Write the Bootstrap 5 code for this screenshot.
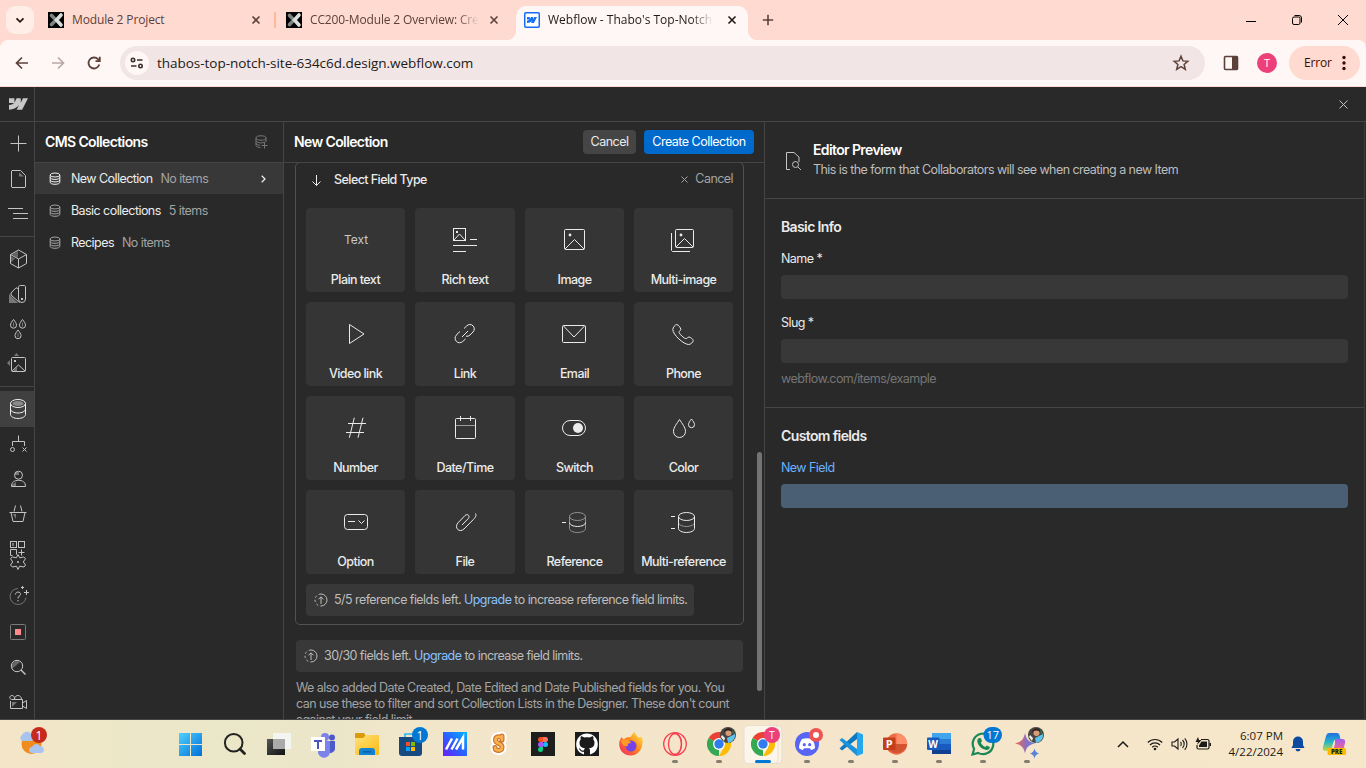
<!DOCTYPE html>
<html lang="en">
<head>
<meta charset="utf-8">
<title>Webflow - Thabo's Top-Notch Site</title>
<link href="https://cdn.jsdelivr.net/npm/bootstrap@5.3.0/dist/css/bootstrap.min.css" rel="stylesheet">
<style>
:root{--line:#454545;--panel:#292929;--ic:#c4c4c4}
html,body{height:100%;overflow:hidden}
body{font-family:"Inter",sans-serif;font-size:12.5px;line-height:16px;letter-spacing:-.56px;background:var(--panel);color:#ebebeb}
svg{display:block;flex:none;overflow:visible;fill:none;stroke:currentColor}
svg text{stroke:none;letter-spacing:0}
.seg{font-family:"Open Sans","Noto Sans",sans-serif;letter-spacing:0}
/* browser chrome */
.tabstrip{height:40px;background:#ffdad0;color:#5c413a;font-size:12px}
.tabsearch{width:28px;height:28px;margin-left:6px;border-radius:9px;background:#ffeee8;color:#2b1713}
.btab{height:28px}
.ttl{overflow:hidden;white-space:nowrap;line-height:28px;letter-spacing:-.14px}
.fade-end{-webkit-mask-image:linear-gradient(90deg,#000 calc(100% - 22px),transparent);mask-image:linear-gradient(90deg,#000 calc(100% - 22px),transparent)}
.btab-on{height:34px;margin-top:6px;width:232px;background:#fff7f5;border-radius:10px 10px 0 0;padding:0 0 6px 8px;color:#231917;position:relative}
.btab-on .ttl{letter-spacing:0}
.btab-on:before,.btab-on:after{content:"";position:absolute;bottom:0;width:10px;height:10px}
.btab-on:before{left:-10px;background:radial-gradient(circle at 0 0,transparent 10px,#fff7f5 10.5px)}
.btab-on:after{right:-10px;background:radial-gradient(circle at 100% 0,transparent 10px,#fff7f5 10.5px)}
.tabsep{width:2px;height:16px;background:#ffb59e;border-radius:1px}
.winbtn{width:46px;height:40px;color:#000}
.addrrow{height:47px;background:#ffdad0;color:#5c413a}
.addrin{height:46px;background:#fff7f5;border-radius:8px 8px 0 0;padding-right:6px}
.omni{width:1085px;height:34px;border-radius:17px;background:#f1e6e5;padding:0 15px 0 5px;margin-left:14px}
.site{width:24px;height:24px;border-radius:50%;background:#fff7f5;color:#3b2d2a}
.url{color:#231917;font-size:13.5px;line-height:20px;margin-left:8px;letter-spacing:-.03px}
.errpill{width:71px;height:34px;border-radius:17px;background:#ffdad0;color:#3a0b01;font-size:12px;margin-left:12px;padding-left:15px;letter-spacing:-.15px}
.avatar{width:20px;height:20px;border-radius:50%;background:#ec407a;color:#ffe;font-size:11px}
/* app frame */
.app{height:633px;background:var(--panel);border-bottom:1px solid var(--line)}
.topline{height:35px;border-bottom:1px solid var(--line)}
.logo-cell{width:35px;border-right:1px solid var(--line);color:#c8c8c8}
.rail{width:35px;border-right:1px solid var(--line);color:var(--ic);padding-top:4px}
.rail-it{height:35px;padding:5px 0 0 6px}
.rail-on{height:36px;background:#404040;color:#f0f0f0}
.rail hr{margin:5px 0 4px;opacity:1;border-color:var(--line);border-width:1px 0 0;color:var(--line);height:1px}
.rail-low{margin-top:-23px}
.cms{width:249px;border-right:1px solid var(--line)}
.phead{height:41px;border-bottom:1px solid var(--line);padding:0 10px}
.h-ttl{font-size:14px;font-weight:600;letter-spacing:-.62px;color:#fff;line-height:16px}
.crow{height:31px;margin-bottom:1px;padding:0 14px;color:#ededed}
.crow svg{color:#a3a3a3}
.crow-on{background:#383838}
.crow-on svg{color:#f0f0f0}
.dim{color:#a3a3a3}
.mid{width:480px}
.bt{height:24px;border-radius:4px;padding:0;width:53px;font-size:12.5px;line-height:24px;color:#ebebeb;background:#454545;border:0;letter-spacing:-.5px;white-space:nowrap}
.bt-main{width:110px;background:#006acc;color:#fff}
.scroller{height:556px;overflow:hidden}
.fbox{width:449px;height:463px;margin:-1px 0 0 11px;border:1px solid #525252;border-radius:5px;padding:0 10px}
.fgrid{display:grid;grid-template-columns:99px 100px 99px 99px;gap:10px;margin-top:13px}
.ftile{height:84px;border-radius:4px;background:#353535;color:#ebebeb;text-align:center;padding-top:20px;font-weight:450}
.ftile svg{margin-left:37px;margin-bottom:19px}
.limit{height:32px;border-radius:4px;background:#383838;color:#bdbdbd;white-space:nowrap}
.limit a{color:#8ac2ff;text-decoration:none}
.note{width:447px;margin:8px 0 0 12px;color:#a3a3a3;white-space:nowrap}
.thumb{width:5px;height:239px;margin-top:289px;margin-left:13px;border-radius:3px;background:#737373}
.prev{border-left:1px solid var(--line);border-right:1px solid #3a3a3a;margin-right:1px}
.prev-head{height:77px;border-bottom:1px solid var(--line);padding:20px 0 0 18px}
.prev-info{height:209px;border-bottom:1px solid var(--line);padding:20px 16px 0}
.prev .h-ttl{color:#ebebeb}
.prev-head .h-ttl{color:#fff}
.inp{height:24px;border-radius:4px;background:#383838}
.inp-new{background:#4b5f74}
/* taskbar */
.task{height:48px;background:linear-gradient(90deg,#f5e5c8,#ebe7c8 10%,#ebe6c9 24%,#f2e6ca 30%,#f5e5ca 60%,#f6e7cb)}
.task>svg{width:44px;height:48px}
.weather{margin-right:125px}
.tray{color:#1d1b17;font-size:11.5px;line-height:16px}
</style>
</head>
<body>
<svg width="0" height="0" style="position:absolute" aria-hidden="true">
 <defs>
  <linearGradient id="gWin" x1="0" y1="0" x2="1" y2="1"><stop offset="0" stop-color="#4fd0ff"/><stop offset="1" stop-color="#0070d8"/></linearGradient>
  <linearGradient id="gM" x1="0" y1="1" x2="1" y2="0"><stop offset="0" stop-color="#6a1df5"/><stop offset=".5" stop-color="#2a62ff"/><stop offset="1" stop-color="#00b4ff"/></linearGradient>
  <linearGradient id="gFox" x1="1" y1="0" x2="0" y2="1"><stop offset="0" stop-color="#fff04a"/><stop offset=".45" stop-color="#ff8a1c"/><stop offset="1" stop-color="#f01f6a"/></linearGradient>
  <linearGradient id="gFold" x1="0" y1="0" x2="1" y2="1"><stop offset="0" stop-color="#ffe27a"/><stop offset="1" stop-color="#fbb911"/></linearGradient>
  <linearGradient id="gSpark" x1="0" y1="0" x2="1" y2="0"><stop offset="0" stop-color="#f2664b"/><stop offset=".5" stop-color="#8a6fc4"/><stop offset="1" stop-color="#3f8fe8"/></linearGradient>
  <linearGradient id="gDk" x1="0" y1="0" x2="1" y2="1"><stop offset="0" stop-color="#555"/><stop offset="1" stop-color="#111"/></linearGradient>
  <linearGradient id="gCopA" x1="0" y1="0" x2="0" y2="1"><stop offset="0" stop-color="#1f6fe0"/><stop offset=".5" stop-color="#25b5c9"/><stop offset="1" stop-color="#c9d93a"/></linearGradient>
  <linearGradient id="gCopB" x1="0" y1="0" x2="0" y2="1"><stop offset="0" stop-color="#a45bf0"/><stop offset="1" stop-color="#ff6a7c"/></linearGradient>
  <symbol id="x" viewBox="0 0 16 16"><path d="M4.500 4.500l7 7M11.500 4.500l-7 7" stroke-width="1.600"/></symbol>
  <symbol id="wf" viewBox="0 0 20 12"><path stroke="none" fill="currentColor" d="M20 0l-6.200 12H8l2.600-5C8.500 9.800 5 11.700 0 12V7.200s3.200-.2 5.100-2.200H0V0h5.700v4.600L8 0h4.400v4.600L14.700 0z"/></symbol>
  <symbol id="fav" viewBox="0 0 16 16"><path stroke="none" fill="#000" d="M0 0h16v16H0z"/><path stroke="#7d8483" stroke-width="3.600" stroke-linecap="round" d="M3.500 3.500l3 3M3.500 12.500l3-3"/><path stroke="#d9dedd" stroke-width="3.600" stroke-linecap="round" d="M13 3L8.500 8l4.500 5"/></symbol>
  <symbol id="db" viewBox="0 0 12 13"><ellipse cx="6" cy="3" rx="4.800" ry="2"/><path d="M1.200 3v7.300c0 1.200 2.100 2 4.800 2s4.800-.8 4.800-2V3M1.200 5.400c0 1.200 2.100 2 4.800 2s4.800-.8 4.800-2M1.200 7.900c0 1.200 2.100 2 4.800 2s4.800-.8 4.800-2"/></symbol>
  <symbol id="up" viewBox="0 0 14 14"><circle cx="7" cy="7" r="6" stroke-dasharray="19 2.200 2.200 2.200 2.200 2.200 2.200 2.200 3.500" transform="rotate(-90 7 7)"/><path d="M7 11V4M4.500 6.300L7 3.800l2.500 2.500"/></symbol>
  <symbol id="chr" viewBox="0 0 24 24"><g stroke="none"><path fill="#ea4335" d="M12 12L1.600 6a12 12 0 0 1 20.800 0z"/><path fill="#34a853" d="M12 12l0 12A12 12 0 0 1 1.600 6z"/><path fill="#fbbc05" d="M12 6h10.400A12 12 0 0 1 12 24l5.200-9z"/><circle cx="12" cy="12" r="6" fill="#fff"/><circle cx="12" cy="12" r="4.700" fill="#2f7cf0"/></g></symbol>
  <symbol id="pic" viewBox="0 0 16 16"><g stroke="none"><circle cx="8" cy="8" r="8" fill="#4b4440"/><path fill="#5bc5ee" d="M7 11l8-4a8 8 0 0 1-7 9z"/><circle cx="8.500" cy="6" r="3" fill="#d99c78"/><path fill="#2d2523" d="M4 6c0-6 9-6 8-1-3-2-6-2-8 1z"/><path fill="#eee" d="M2 8l3 3-1 3-3-4z"/><path fill="#2f6d4c" d="M12 2l3 4-2 2z"/></g></symbol>
 </defs>
</svg>
<div class="d-flex flex-column vh-100">
<header>
 <div class="tabstrip seg d-flex align-items-center">
  <div class="tabsearch d-flex align-items-center justify-content-center"><svg width="10" height="10" viewBox="0 0 10 10" stroke-width="1.800"><path d="M1.500 3.300L5 6.800l3.500-3.500"/></svg></div>
  <div class="btab d-flex align-items-center" style="width:240px"><svg width="16" height="16" style="margin-left:14px"><use href="#fav"/></svg><span class="ttl flex-grow-1" style="margin-left:8px">Module 2 Project</span><svg width="16" height="16" style="margin-right:10px"><use href="#x"/></svg></div>
  <div class="tabsep"></div>
  <div class="btab d-flex align-items-center" style="width:240px"><svg width="16" height="16" style="margin-left:10px"><use href="#fav"/></svg><span class="ttl fade-end" style="margin-left:8px;width:169px">CC200-Module 2 Overview: Creating</span><svg width="16" height="16" style="margin-left:7px"><use href="#x"/></svg></div>
  <div class="btab-on d-flex align-items-center"><svg width="16" height="16" viewBox="0 0 16 16" color="#146ef5"><rect x=".75" y=".75" width="14.500" height="14.500" rx="1" fill="#fff" stroke-width="1.500"/><use href="#wf" x="3" y="5" width="10" height="6"/></svg><span class="ttl fade-end" style="margin-left:8px;width:165px">Webflow - Thabo's Top-Notch Site</span><svg width="16" height="16" style="margin-left:11px"><use href="#x"/></svg></div>
  <svg width="12" height="12" viewBox="0 0 12 12" style="margin-left:14px" stroke-width="1.600"><path d="M6 .8v10.400M.8 6h10.400"/></svg>
  <div class="ms-auto d-flex">
   <div class="winbtn d-flex align-items-center justify-content-center"><svg width="10" height="11" viewBox="0 0 10 11"><path d="M0 6.500h10"/></svg></div>
   <div class="winbtn d-flex align-items-center justify-content-center"><svg width="10" height="10" viewBox="0 0 10 10"><rect x=".5" y="2" width="7.500" height="7.500" rx="1.500"/><path d="M2.500.5h4.500a2.500 2.500 0 0 1 2.500 2.500v4.500"/></svg></div>
   <div class="winbtn d-flex align-items-center justify-content-center"><svg width="10" height="10" viewBox="0 0 10 10"><path d="M0 0l10 10M10 0L0 10"/></svg></div>
  </div>
 </div>
 <div class="addrrow">
  <div class="addrin seg d-flex align-items-center">
   <svg width="16" height="16" viewBox="0 0 16 16" style="margin-left:14px" stroke-width="1.700"><path d="M14 8H2.800M8 2.500L2.500 8 8 13.500"/></svg>
   <svg width="16" height="16" viewBox="0 0 16 16" style="margin-left:20px" stroke-width="1.700" color="#b8a9a5"><path d="M2 8h11.200M8 2.500L13.500 8 8 13.500"/></svg>
   <svg width="16" height="16" viewBox="0 0 16 16" style="margin-left:20px" stroke-width="1.800"><path d="M13.300 9.500A5.500 5.500 0 1 1 12 4.200l1.300 1.500"/><path d="M13.800 1.800v4.300H9.500" /></svg>
   <div class="omni d-flex align-items-center" style="margin-left:18px">
    <div class="site d-flex align-items-center justify-content-center"><svg width="14" height="12" viewBox="0 0 14 12" stroke-width="1.600"><circle cx="3" cy="3" r="1.700"/><path d="M7 3h5.500M1 9h5.500"/><circle cx="10.500" cy="9" r="1.700"/></svg></div>
    <span class="url">thabos-top-notch-site-634c6d.design.webflow.com</span>
    <svg class="ms-auto" width="18" height="18" viewBox="0 0 18 18" stroke-width="1.500"><path d="M9 2.300l1.900 4.600 4.900.4-3.700 3.200 1.200 4.800L9 12.700l-4.300 2.600 1.200-4.800-3.700-3.200 4.900-.4z"/></svg>
   </div>
   <svg width="16" height="16" viewBox="0 0 16 16" style="margin-left:18px"><rect x="1.500" y="1.500" width="13" height="13" rx="1" stroke-width="1.600"/><path fill="currentColor" stroke="none" d="M9 1h5.500v14H9z"/></svg>
   <div class="avatar d-flex align-items-center justify-content-center" style="margin-left:18px">T</div>
   <div class="errpill d-flex align-items-center">Error<svg width="4" height="16" viewBox="0 0 4 16" style="margin-left:10px"><g fill="currentColor" stroke="none"><circle cx="2" cy="2.500" r="1.700"/><circle cx="2" cy="8" r="1.700"/><circle cx="2" cy="13.500" r="1.700"/></g></svg></div>
  </div>
 </div>
</header>
<div class="app d-flex flex-column">
 <div class="topline d-flex justify-content-between align-items-stretch">
  <div class="logo-cell d-flex align-items-center"><svg width="19" height="12" style="margin-left:9px"><use href="#wf"/></svg></div>
  <svg class="align-self-center" width="9" height="9" viewBox="0 0 9 9" style="margin-right:18px" color="#c4c4c4"><path d="M.5.5l8 8M8.500.5l-8 8"/></svg>
 </div>
 <div class="d-flex flex-grow-1" style="min-height:0">
  <nav class="rail d-flex flex-column flex-shrink-0">
   <div class="rail-it"><svg width="24" height="24"><path d="M4.500 12.500h16M12.500 4.500v16"/></svg></div>
   <div class="rail-it"><svg width="24" height="24"><path d="M13 6.500v4h5z" fill="#777" stroke="none"/><path d="M6 4.500h8.500l5 5V21l-.5.500H6l-.5-.5V5z"/></svg></div>
   <div class="rail-it"><svg width="24" height="24"><path d="M2 7.500h15M7 12.500h15M7 17.500h15"/></svg></div>
   <hr>
   <div class="rail-it"><svg width="24" height="24"><path fill="#666" stroke="none" d="M12 5v7L6 8.500zM5 10l4 2.500-4 4z"/><path d="M12.500 4l8 4.500v9l-8 4.500-8-4.500v-9zM4.500 8.500l8 4.500 8-4.500M12.500 13v9"/></svg></div>
   <div class="rail-it"><svg width="24" height="24"><path fill="#777" stroke="none" d="M3 13l9 9H3z"/><path d="M12.500 6.500c0-1.500.500-2 2-2h3.500c1 0 1.500.5 1.500 1.500V18a3.500 3.500 0 0 1-7 0zM12 7.500L10 6.800 5 12l0 2 8.500 7.500"/><path fill="currentColor" stroke="none" d="M15 17h2v2h-2z"/></svg></div>
   <div class="rail-it"><svg width="24" height="24"><path id="dr" d="M7.500 3.500c-1.500 2-3 3.800-3 5.700a3 3 0 0 0 6 0c0-1.900-1.500-3.700-3-5.700z"/><path stroke="#777" d="M7.500 6.500v4M16.500 6.500v4M12 17v4"/><use href="#dr" x="9"/><use href="#dr" x="4.500" y="10.500"/></svg></div>
   <div class="rail-it"><svg width="24" height="24"><path fill="#777" stroke="none" d="M8 5l2.500-3L13 5zM4 9v6l-3-3z"/><path fill="#777" stroke="none" d="M8 19l3-3v4H8z"/><rect x="5.500" y="6.500" width="14" height="14" rx="1"/><path d="M6 20l6.500-6 6.500 6"/><path fill="currentColor" stroke="none" d="M8 9h2v2H8z"/></svg></div>
   <hr>
   <div class="rail-it rail-on"><svg width="24" height="24"><ellipse cx="12" cy="7.500" rx="5.500" ry="2.500" fill="#8a8a8a" stroke="none"/><ellipse cx="12" cy="7.500" rx="7.500" ry="4"/><path d="M4.500 7.500v11c0 2.200 3.400 4 7.500 4s7.500-1.800 7.500-4v-11M4.500 13c0 2.200 3.400 4 7.500 4s7.500-1.800 7.500-4"/></svg></div>
   <div class="rail-it"><svg width="24" height="24"><path d="M12.500 3.500v6M6.500 14V9.500h12V14M16.500 15.500l4 4M20.500 15.500l-4 4"/><circle cx="6.500" cy="17.500" r="2"/></svg></div>
   <div class="rail-it"><svg width="24" height="24"><path fill="#777" stroke="none" d="M9 5h4v3H9zM6 18l4-3v4H6z"/><circle cx="12.500" cy="8.200" r="4"/><path d="M5.500 19.500c0-4.200 2.800-6.200 7-6.200s7 2 7 6.200z"/></svg></div>
   <div class="rail-it"><svg width="24" height="24"><path fill="#777" stroke="none" d="M7 12h3v5z"/><path d="M3.500 10.500h17M5 10.500l2 9h10l2-9M8 9.500L9.500 3.500M16 9.500l-1.500-6"/></svg></div>
   <div class="rail-it"><svg width="24" height="24"><path fill="#777" stroke="none" d="M6 6h2v3H6z"/><rect x="4.500" y="4.500" width="6" height="6"/><rect x="12.500" y="4.500" width="6" height="6"/><path d="M10.500 17.500V12.500h-6v6h2M15.500 12.500v6M12.500 15.500h6"/></svg></div>
   <div class="rail-low">
    <div class="rail-it"><svg width="24" height="24"><path d="M12 5.500l1.700 3.300 4-.8 1.800 1.500-2.200 3.500 2.200 3-1.500 2-4.500-.8L12 20.500l-1.500-3.300-4.200.8-1.800-2 2.200-3-2.200-3.500L6.300 8l4 .8z"/><path d="M11 13h2M12 12v2" /></svg></div>
    <div class="rail-it"><svg width="24" height="24"><path stroke="#757575" d="M12 4.500a8 8 0 1 0 8 9"/><path d="M9.500 10.500c0-3.500 5.500-3 5 0-.3 1.500-2.500 1.500-2.500 4M12 16v1.500M15 3.500h3M16.500 2v3M18 8.500h5M20.500 6v5"/></svg></div>
    <div class="rail-it"><svg width="24" height="24"><rect x="4.500" y="5.500" width="15" height="15" rx="1" stroke="#7b7b7b"/><path fill="#ff8a8a" stroke="none" d="M9 10h6v6H9z"/></svg></div>
    <div class="rail-it"><svg width="24" height="24"><path fill="#666" stroke="none" d="M6 15l8-7-3-2-5 4z"/><circle cx="11" cy="12" r="5.700"/><path stroke-width="1.400" d="M15 16l4.500 4.500"/></svg></div>
    <div class="rail-it"><svg width="24" height="24"><path fill="#777" stroke="none" d="M6 13h5l-5 5z"/><path d="M4.500 12V19.500h12V10.500h-11C3 10 3.300 6.500 6 6.500c2 0 2.500 2 2.500 3.500C9 5 15.500 5.500 15.500 10.500M16.500 14l4-2.500v8l-4-2.500"/></svg></div>
   </div>
  </nav>
  <section class="cms flex-shrink-0">
   <div class="phead d-flex align-items-center justify-content-between"><span class="h-ttl">CMS Collections</span><svg width="14" height="14" viewBox="0 0 14 14" color="#757575" style="margin-right:4px"><ellipse cx="6" cy="3" rx="5" ry="2.200"/><path d="M1 3v7.500c0 1.200 2 2 4.500 2M11 3v3.500M1 5.700c0 1.200 2.200 2.200 5 2.200s5-1 5-2.200M1 8.300c0 1 1.500 1.800 4 2M9.500 7.500v6M6.500 10.500h6"/></svg></div>
   <div class="crow crow-on d-flex align-items-center"><svg width="12" height="13"><use href="#db"/></svg><span style="margin-left:10px">New Collection</span><span class="dim ms-2">No items</span><svg class="ms-auto" width="5" height="8" viewBox="0 0 5 8" style="margin-right:3px" stroke-width="1.200"><path d="M.7.8L4 4 .7 7.200"/></svg></div>
   <div class="crow d-flex align-items-center"><svg width="12" height="13"><use href="#db"/></svg><span style="margin-left:10px">Basic collections</span><span class="dim ms-2">5 items</span></div>
   <div class="crow d-flex align-items-center"><svg width="12" height="13"><use href="#db"/></svg><span style="margin-left:10px">Recipes</span><span class="dim ms-2">No items</span></div>
  </section>
  <section class="mid flex-shrink-0">
   <div class="phead d-flex align-items-center"><span class="h-ttl me-auto">New Collection</span><button class="bt">Cancel</button><button class="bt bt-main ms-2">Create Collection</button></div>
   <div class="scroller d-flex">
    <div>
     <div class="fbox">
      <div class="d-flex align-items-center" style="height:32px;padding-top:2px"><svg width="9" height="11" viewBox="0 0 9 11" style="margin-left:6px"><path d="M4.500 0v10.500M.5 6.500l4 4 4-4"/></svg><span style="margin-left:13px;font-weight:450">Select Field Type</span><span class="ms-auto dim d-flex align-items-center" style="margin-top:-2px"><svg width="7" height="7" viewBox="0 0 7 7" style="margin-right:7px"><path d="M.5.5l6 6M6.500.5l-6 6"/></svg>Cancel</span></div>
      <div class="fgrid">
       <div class="ftile"><svg width="25" height="25"><text x="13" y="16" text-anchor="middle" font-size="12" font-weight="400" fill="#c8c8c8">Text</text></svg>Plain text</div>
       <div class="ftile"><svg width="25" height="25"><rect x="1.500" y=".5" width="12" height="12"/><path d="M2 12l5.500-6 5.500 6M18 11.500h7M1 17.500h24M1 23.500h13"/><path fill="currentColor" stroke="none" d="M4 3h2v2H4z"/></svg>Rich text</div>
       <div class="ftile"><svg width="25" height="25"><rect x="2.500" y="1.500" width="20" height="20" rx="1"/><path d="M3 21l9.500-9.500L22 21"/><circle cx="8" cy="7" r="1.400" fill="currentColor" stroke="none"/></svg>Image</div>
       <div class="ftile"><svg width="25" height="25"><rect x="4.500" y="1.500" width="18" height="18" rx="1"/><path d="M5 19l8.500-8.500L22 19M.5 5v17.500l1 1H19"/><circle cx="10" cy="7" r="1.400" fill="currentColor" stroke="none"/></svg>Multi-image</div>
       <div class="ftile"><svg width="25" height="25"><path stroke-linejoin="round" d="M6.500 2.500L21 12 6.500 21.500z"/></svg>Video link</div>
       <div class="ftile"><svg width="25" height="25"><path d="M10 15l6-6M12 6.500l2.800-2.700a4.300 4.300 0 0 1 6.200 6.200L18 13a4.300 4.300 0 0 1-4 1.200M8 9.800c-.7.100-1.200.5-1.700 1L4.500 13a4.300 4.300 0 0 0 6.200 6.500L13.500 17"/></svg>Link</div>
       <div class="ftile"><svg width="25" height="25"><rect x=".5" y="3.500" width="23" height="17" rx="1"/><path d="M1.500 4L12 15 22.500 4"/></svg>Email</div>
       <div class="ftile"><svg width="25" height="25"><path stroke-linejoin="round" d="M5.800 2.500c1.200 0 4 3.500 4 4.700 0 1.300-1.800 2-1.800 3 0 1.500 5.300 6.500 7 6.500 1 0 1.700-1.700 3-1.700 1.500 0 4.200 2.300 4.200 3.600 0 1.500-2.500 3.900-4.500 3.900C12.500 22.500 1.800 12.500 1.800 7.500c0-2 2.500-5 4-5z"/></svg>Phone</div>
       <div class="ftile"><svg width="25" height="25"><path d="M5 7.500h18M3 16.500h18M11.300 1.700l-5 20M20 1.700l-5 20"/></svg>Number</div>
       <div class="ftile"><svg width="25" height="25"><path opacity=".55" d="M4 9.500h19"/><rect x="3.500" y="2.500" width="20" height="20" rx="1"/><path d="M8.500 0v5M18.500 0v5"/></svg>Date/Time</div>
       <div class="ftile"><svg width="25" height="25"><rect x=".5" y="4.500" width="23" height="15" rx="7.500"/><circle cx="16" cy="12" r="5" fill="currentColor" stroke="none"/></svg>Switch</div>
       <div class="ftile"><svg width="25" height="25"><path d="M8.500 3.500c-2.500 4-6 7.800-6 12a6 6 0 0 0 12 0c0-4.200-3.500-8-6-12zM20.500 3c-1.500 2-3 3.700-3 5.700a3 3 0 0 0 6 0c0-2-1.500-3.700-3-5.700z"/></svg>Color</div>
       <div class="ftile"><svg width="25" height="25"><rect x="1.500" y="4.500" width="23" height="15" rx="3"/><path d="M5 11.500h7M15.500 10.500l3 3 3-3"/></svg>Option</div>
       <div class="ftile"><svg width="25" height="25"><path d="M10 15l6.300-6.500c2.200-2.600-.9-5.300-3.300-3L6 12.800c-4.300 5 1.500 10.500 6 6.200l9.200-9.300C24 6.800 24.500 5 23.500 3.500"/></svg>File</div>
       <div class="ftile"><svg width="25" height="25"><g opacity=".5"><ellipse cx="15.500" cy="6.500" rx="8" ry="4"/><path d="M7.500 6.500v12c0 2.200 3.600 4 8 4s8-1.800 8-4v-12"/></g><path d="M0 12.500h4M7.500 12.500c0 2.200 3.600 4 8 4s8-1.800 8-4"/></svg>Reference</div>
       <div class="ftile"><svg width="25" height="25"><path opacity=".5" d="M7.500 12.500c0 2.200 3.600 4 8 4s8-1.800 8-4"/><ellipse cx="15.500" cy="6.500" rx="8" ry="4"/><path d="M0 6.500h4M0 18.500h4M7.500 6.500v12c0 2.200 3.600 4 8 4s8-1.800 8-4v-12"/></svg>Multi-reference</div>
      </div>
      <div class="limit d-flex align-items-center" style="width:388px;margin-top:10px;padding-left:8px"><svg width="14" height="14"><use href="#up"/></svg><span style="margin-left:6px">5/5 reference fields left. <a href="#">Upgrade</a> to increase reference field limits.</span></div>
     </div>
     <div class="limit d-flex align-items-center" style="width:447px;margin:15px 0 0 12px;padding-left:8px"><svg width="14" height="14"><use href="#up"/></svg><span style="margin-left:6px">30/30 fields left. <a href="#">Upgrade</a> to increase field limits.</span></div>
     <p class="note">We also added Date Created, Date Edited and Date Published fields for you. You<br>can use these to filter and sort Collection Lists in the Designer. These don't count<br>against your field limit.</p>
    </div>
    <div class="thumb"></div>
   </div>
  </section>
  <section class="prev flex-grow-1">
   <div class="prev-head d-flex"><svg width="20" height="20" viewBox="0 0 20 20" style="margin:9px 10px 0 0" color="#c4c4c4"><path d="M7 18.500H3.500V1.500h7.500l5 4.500v5"/><circle cx="12.500" cy="13.500" r="3"/><path d="M15 16l3 3"/></svg><div><div class="h-ttl">Editor Preview</div><div style="color:#bdbdbd;margin-top:4px">This is the form that Collaborators will see when creating a new Item</div></div></div>
   <div class="prev-info">
    <div class="h-ttl">Basic Info</div>
    <div style="margin-top:16px">Name *</div><div class="inp" style="margin-top:8px"></div>
    <div style="margin-top:16px">Slug *</div><div class="inp" style="margin-top:8px"></div>
    <div style="margin-top:8px;color:#757575">webflow.com/items/example</div>
   </div>
   <div style="padding:20px 16px 0"><div class="h-ttl">Custom fields</div><div style="margin-top:16px;color:#6bb1ff">New Field</div><div class="inp inp-new" style="margin-top:8px"></div></div>
  </section>
 </div>
</div>
<footer class="task seg d-flex align-items-start">
 <svg class="weather" viewBox="0 0 44 48"><g stroke="none"><circle cx="31.500" cy="24" r="10" fill="#f08c1d"/><path fill="#a9c4ee" d="M22 21a3.500 3.500 0 0 1 0-6 5 5 0 0 1 9-1c4 0 4 7 0 7zM32 33a3 3 0 0 1 0-6 4.500 4.500 0 0 1 8-1c5 0 5 7 1 7z"/><circle cx="39" cy="15" r="8" fill="#c42b1c"/><text x="39" y="19.500" text-anchor="middle" font-size="12" fill="#fff">1</text></g></svg>
 <svg viewBox="0 0 44 48"><path stroke="none" fill="url(#gWin)" d="M10 13h11v11H10zM22 13h11v11H22zM10 25h11v11H10zM22 25h11v11H22z"/></svg>
 <svg viewBox="0 0 44 48" color="#222"><circle cx="20.700" cy="22.700" r="8.800" stroke-width="2"/><path stroke-width="2.800" stroke-linecap="round" d="M27 29l4.500 4.500"/></svg>
 <svg viewBox="0 0 44 48"><g stroke="none"><path fill="url(#gDk)" d="M10 19h18v16H10z"/><path fill="#f4f4f4" d="M16 13h18v16H16z" opacity=".93"/><path fill="#aaa" d="M16 19h12v10H16z"/></g></svg>
 <svg viewBox="0 0 44 48"><g stroke="none"><circle cx="31" cy="17.500" r="3" fill="#5059c9"/><path fill="#5059c9" d="M26 21h8v8a5 5 0 0 1-8 3z"/><circle cx="24" cy="17" r="4" fill="#7b83eb"/><path fill="#7b83eb" d="M17 21h12v9a6 6 0 0 1-12 3z"/><path fill="#fff" d="M10 17h14v14H10z"/><path fill="#4b53bc" d="M13 20h8v2h-3v7h-2v-7h-3z"/></g></svg>
 <svg viewBox="0 0 44 48"><g stroke="none"><path fill="#d99a0b" d="M10 14q0-1 1-1h8l2 3v4H10z"/><path fill="url(#gFold)" d="M10 18h8l3-3h13v19q0 1-1 1H11q-1 0-1-1z"/><path fill="#1382d0" d="M14 35v-4q0-3 3-3h10q3 0 3 3v4z"/><path fill="#0a5fa8" d="M18 31h8v1.500h-8z"/></g></svg>
 <svg viewBox="0 0 44 48"><path stroke="#29b6f2" stroke-width="1.600" d="M16 18v-4h10v4"/><g stroke="none"><path fill="#174a80" d="M10 17h23v16q0 3-3 3H13q-3 0-3-3z"/><path fill="#f25022" d="M17 22h4v4h-4z"/><path fill="#7fba00" d="M22 22h4v4h-4z"/><path fill="#00a4ef" d="M17 27h4v4h-4z"/><path fill="#ffb900" d="M22 27h4v4h-4z"/><circle cx="31" cy="15" r="8" fill="#0078d4"/><text x="31" y="19.500" text-anchor="middle" font-size="12" fill="#fff">1</text></g></svg>
 <svg viewBox="0 0 44 48"><path stroke="none" fill="url(#gM)" d="M10 12h24v24H10z"/><path stroke="#fff" stroke-width="2.500" d="M13 29.500l6-11M18.500 29.500l6-11M23 29.500l7-12v12"/></svg>
 <svg viewBox="0 0 44 48"><g stroke-linecap="round" stroke-linejoin="round"><path stroke="#fff" stroke-width="9" d="M25 18c-3.500-2-6.500-1.500-6.500 2 0 4 6.500 2.800 6.500 7s-4 4-6.500 2.500l-.5-2M25 16v4"/><path stroke="#c9762f" stroke-width="5" d="M25 18c-3.500-2-6.500-1.500-6.500 2 0 4 6.500 2.800 6.500 7s-4 4-6.500 2.500l-.5-2M25 16v4"/><path stroke="#fbb04c" stroke-width="2.600" d="M25 18c-3.500-2-6.500-1.500-6.500 2 0 4 6.500 2.800 6.500 7s-4 4-6.500 2.500l-.5-2M25 16v4"/></g></svg>
 <svg viewBox="0 0 44 48"><g stroke="none"><path fill="#1e1e1e" d="M10 12h24v24H10z"/><path fill="#f24e1e" d="M22 17h-2.500a2.500 2.500 0 0 0 0 5H22z"/><path fill="#ff7262" d="M22 17h2.500a2.500 2.500 0 0 1 0 5H22z"/><path fill="#a259ff" d="M22 22h-2.500a2.500 2.500 0 0 0 0 5H22z"/><circle cx="24.500" cy="24.500" r="2.500" fill="#1abcfe"/><path fill="#0acf83" d="M22 27h-2.500a2.500 2.500 0 1 0 2.500 2.500z"/></g></svg>
 <svg viewBox="0 0 44 48"><g stroke="none"><path fill="#1b1b1b" d="M10 12h24v24H10z"/><path fill="#fff" d="M19 34.500c-5-1.500-7.800-5.500-7.800-10.300a10.800 10.800 0 1 1 21.600 0c0 4.800-2.800 8.800-7.800 10.300v-3.700c0-1.200-.3-2-1-2.500 3.500-.4 5.500-2 5.500-5.500 0-1.400-.4-2.400-1.200-3.300.3-1.100.2-2.200-.2-3.200-1.200 0-2.400.7-3.300 1.300-1.800-.4-3.800-.4-5.600 0-.9-.6-2.100-1.300-3.300-1.300-.4 1-.5 2.100-.2 3.200-.8.900-1.200 1.900-1.200 3.300 0 3.500 2 5.100 5.500 5.500-.5.400-.9 1-1 1.900-2 .8-3-.2-3.800-1.500l-1.500-.6c.6 1.500 2.300 4.500 5.300 3.700z"/></g></svg>
 <svg viewBox="0 0 44 48"><g stroke="none"><path fill="url(#gFox)" d="M25 12c2 2 2.500 4 4.500 5.500L33 17c2 8-1 18-11 18.500C13 35.500 9 28 10.500 21l2-4 2 2.500c2-2 4-2.500 7-2.500z"/><circle cx="22" cy="26" r="5.500" fill="#7542e5"/><path fill="#ff9a26" d="M12 20c4-2 9 0 10 3-3 0-4 1-3 3-4 1-7-2-7-6z"/></g></svg>
 <svg viewBox="0 0 44 48"><g stroke="#fa3e50" stroke-width="1.300"><circle cx="22" cy="24" r="11.300"/><ellipse cx="22" cy="24" rx="6.500" ry="10.500"/><path d="M24 14c6 4 6 16 0 20"/></g><rect x="19" y="40" width="6" height="3" rx="1.500" fill="#857d6f" stroke="none"/></svg>
 <svg viewBox="0 0 44 48"><use href="#chr" x="10" y="12" width="24" height="24"/><use href="#pic" x="23" y="7" width="16" height="16"/><rect x="19" y="40" width="6" height="3" rx="1.500" fill="#857d6f" stroke="none"/></svg>
 <svg viewBox="0 0 44 48"><g stroke="#e6dccb"><rect x="8" y="5.500" width="33" height="38" rx="4" fill="#faf2e4"/><rect x="3" y="5.500" width="34" height="38" rx="4" fill="#fbf5ea" stroke="#e9dfcd"/></g><use href="#chr" x="10" y="12" width="24" height="24"/><g stroke="none"><circle cx="31" cy="15" r="8" fill="#ec407a"/><text x="31" y="19" text-anchor="middle" font-size="10.500" fill="#fff">T</text><rect x="14" y="40" width="16" height="3" rx="1.500" fill="#0078d4"/></g></svg>
 <svg viewBox="0 0 44 48"><g stroke="none"><circle cx="22" cy="24" r="12" fill="#5865f2"/><path fill="#fff" d="M17 19c3-1 7-1 10 0 2 3 3 6 3 9-1 1-2.500 1.700-4 2l-1-1.700h-6L18 30c-1.500-.3-3-1-4-2 0-3 1-6 3-9z"/><circle cx="19.300" cy="24.700" r="1.600" fill="#5865f2"/><circle cx="24.700" cy="24.700" r="1.600" fill="#5865f2"/><circle cx="31" cy="15" r="7" fill="#ed5555"/><circle cx="31" cy="15" r="3" fill="#fff"/><rect x="19" y="40" width="6" height="3" rx="1.500" fill="#857d6f"/></g></svg>
 <svg viewBox="0 0 44 48"><g stroke="none"><path fill="#0b78c4" d="M28 12v7L13 30.500l-2.500-2L28 12z"/><path fill="#1a93dc" d="M28 36v-7L13 18l-2.500 2L28 36z"/><path fill="#25a7ee" d="M28 12l6 2.500v19L28 36z"/><rect x="19" y="40" width="6" height="3" rx="1.500" fill="#857d6f"/></g></svg>
 <svg viewBox="0 0 44 48"><g stroke="none"><circle cx="23.500" cy="24" r="10.700" fill="#ed6c47"/><path fill="#ff8f6b" d="M23.500 13.300A10.700 10.700 0 0 1 34.200 24H23.500z"/><path fill="#d35230" d="M13 24h21.200a10.700 10.700 0 0 1-21.200 0z"/><rect x="10" y="17.500" width="12.500" height="12.500" rx="1" fill="#c43e1c"/><text x="16.200" y="28" text-anchor="middle" font-size="11" font-weight="700" fill="#fff">P</text><rect x="19" y="40" width="6" height="3" rx="1.500" fill="#857d6f"/></g></svg>
 <svg viewBox="0 0 44 48"><g stroke="none"><path fill="#41a5ee" d="M15 13h19v6H15z"/><path fill="#2b7cd3" d="M15 19h19v6H15z"/><path fill="#185abd" d="M15 24h19v6H15z"/><path fill="#103f91" d="M15 30h19v4H15z"/><rect x="10" y="17.500" width="12.500" height="12.500" rx="1" fill="#185abd"/><text x="16.200" y="28" text-anchor="middle" font-size="10" font-weight="700" fill="#fff">W</text><rect x="19" y="40" width="6" height="3" rx="1.500" fill="#857d6f"/></g></svg>
 <svg viewBox="0 0 44 48"><path stroke="#1b8755" stroke-width="2.200" d="M11.500 34.500l1.600-5.500a10.300 10.300 0 1 1 4 3.900z"/><g stroke="none"><path fill="#1b8755" d="M18 18l2 .3 1 3-1.200 1.500c1 2 2.500 3.300 4.500 4.200l1.500-1.500 3 1.500c0 2-1.800 3.300-3.500 3-4.500-.7-8-4-9-8.500-.2-1.700.7-3 1.700-3.500z"/><rect x="22.500" y="7" width="18.500" height="16" rx="8" fill="#0078d4"/><text x="31.700" y="19" text-anchor="middle" font-size="11" fill="#fff">17</text><rect x="19" y="40" width="6" height="3" rx="1.500" fill="#857d6f"/></g></svg>
 <svg viewBox="0 0 44 48"><path stroke="none" fill="url(#gSpark)" d="M20 13c1.200 6 3.500 9 10 10.500-6.500 1.500-8.800 4-10 10-1.200-6-3.500-8.500-10-10 6.500-1.500 8.800-4.500 10-10.500zM29.500 28.500c.8 3 1.800 4.200 4.500 5-2.700.8-3.700 2-4.500 5-.8-3-1.800-4.200-4.500-5 2.700-.8 3.700-2 4.500-5z"/><use href="#pic" x="23" y="7" width="16" height="16"/><rect x="19" y="40" width="6" height="3" rx="1.500" fill="#857d6f" stroke="none"/></svg>
 <div class="tray d-flex align-items-center ms-auto h-100">
  <svg width="12" height="7" viewBox="0 0 12 7" stroke-width="1.500"><path d="M1 6l5-5 5 5"/></svg>
  <svg width="16" height="14" viewBox="0 0 16 14" style="margin-left:18px" stroke-width="1.200"><path d="M.8 5.500a10.200 10.200 0 0 1 14.400 0M3 8a7 7 0 0 1 10 0M5.200 10.200a4 4 0 0 1 5.600 0"/><circle cx="8" cy="12" r="1.300" fill="currentColor" stroke="none"/></svg>
  <svg width="17" height="14" viewBox="0 0 17 14" style="margin-left:8px" stroke-width="1.100"><path d="M1 5v4h2.500l3.500 3V2L3.500 5zM9.500 5c1 1 1 3 0 4M11.500 3c2.200 2.200 2.200 6 0 8M13.700 1.300c3 3 3 8.500 0 11.500"/></svg>
  <svg width="16" height="14" viewBox="0 0 16 14" style="margin-left:7px" stroke-width="1.200"><path d="M6 2.500h6.500q1.500 0 1.500 1.500v6.500q0 1.500-1.500 1.500h-9Q2 12 2 10.500V8"/><path fill="currentColor" stroke="none" d="M6.500 4.500h5.500v5.500H4V8.500zM14.500 6H16v3h-1.500zM3 0L.5 5H3L2 8l4.500-5H4z"/></svg>
  <div class="text-end" style="width:72px">6:07 PM<br>4/22/2024</div>
  <svg width="14" height="16" viewBox="0 0 14 16" style="margin-left:8px" color="#0b4aa0"><path fill="currentColor" stroke="none" d="M7 .5a5 5 0 0 1 5 5V9l1.500 3H.5L2 9V5.500a5 5 0 0 1 5-5zM4.500 13h5a2.500 2.500 0 0 1-5 0z"/></svg>
  <svg width="24" height="24" viewBox="0 0 24 24" style="margin:0 20px 0 17px"><g stroke="none"><path fill="url(#gCopA)" d="M7 1h8q2 0 2.500 2l1 4h-4q-2 0-3 3l-2 7q-.5 2-3 2H3Q0 18.500 1 15L4 4q.8-3 3-3z"/><path fill="url(#gCopB)" d="M13 7h7q4 0 3 4l-2 8H9q2 0 3-4l1-3z"/><rect x="5.500" y="16" width="18.500" height="7" rx="1.500" fill="#ffb900"/><text x="14.700" y="22" text-anchor="middle" font-size="6.200" font-weight="800" fill="#222">PRE</text></g></svg>
 </div>
</footer>
</div>
<script src="https://cdn.jsdelivr.net/npm/bootstrap@5.3.0/dist/js/bootstrap.bundle.min.js"></script>
</body>
</html>
